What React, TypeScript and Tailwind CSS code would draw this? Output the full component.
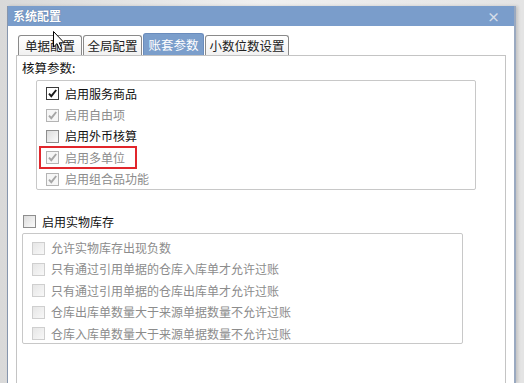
import React from "react";

type Box = "on" | "onDisabled" | "off" | "offDisabled";

const font = { fontFamily: '"Noto Sans CJK SC", "Noto Sans", sans-serif' };

function Check({ kind }: { kind: Box }) {
  const frame =
    kind === "on"
      ? "border-[#3a3a3a] bg-white"
      : kind === "off"
      ? "border-[#8e8e8e] bg-gradient-to-br from-[#dcdcdc] to-[#fbfbfb]"
      : kind === "onDisabled"
      ? "border-[#b4b4b4] bg-[#f6f6f6]"
      : "border-[#cfcfcf] bg-gradient-to-br from-[#e6e6e6] to-[#f8f8f8]";
  const tick = kind === "on" ? "#1a1a1a" : "#a6a6a6";
  return (
    <span className={`w-[13px] h-[13px] border shrink-0 flex items-center justify-center ${frame}`}>
      {(kind === "on" || kind === "onDisabled") && (
        <svg width="11" height="11" viewBox="0 0 11 11">
          <path d="M2 5.6 L4.3 8.2 L9.2 2" fill="none" stroke={tick} strokeWidth="1.9" />
        </svg>
      )}
    </span>
  );
}

function Row({ kind, label, dim, ring }: { kind: Box; label: string; dim?: boolean; ring?: boolean }) {
  return (
    <div className="relative h-[21.4px] flex items-center gap-[6px]">
      <Check kind={kind} />
      <span className={`text-[12px] leading-none ${dim ? "text-[#8c8c8c]" : "text-[#111]"}`}>{label}</span>
      {ring && (
        <span className="absolute left-[-7px] top-[-1px] w-[98px] h-[23px] border-2 border-[#e1262c]" />
      )}
    </div>
  );
}

const tabs = [
  { name: "单据配置", w: "w-[64px]" },
  { name: "全局配置", w: "w-[59px]" },
  { name: "账套参数", w: "w-[61px]", active: true },
  { name: "小数位数设置", w: "w-[84px]" },
];

export default function App() {
  return (
    <div
      className="relative w-[524px] h-[383px] overflow-hidden bg-gradient-to-r from-[#d9d9d9] via-[#f0f0f0] to-[#e4e4e4] pt-[6px] pl-[7px] pr-[8px]"
      style={font}
    >
      <div className="h-full flex flex-col bg-white border-l border-[#8796ad] border-r-2 border-r-[#9aa9c0] shadow-[2px_0_3px_rgba(0,0,0,0.15)]">
        {/* title bar */}
        <div className="h-[20px] shrink-0 bg-[#7a9dcb] flex items-center justify-between pl-[5px] pr-[14px]">
          <span className="text-white text-[12px] font-bold leading-none [text-shadow:0_0_1px_rgba(40,60,100,0.6)]">
            系统配置
          </span>
          <span className="text-[#d4dce8] text-[13px] leading-none font-bold">×</span>
        </div>

        <div className="flex-1 flex flex-col px-[8px] pt-[7px]">
          {/* tabs */}
          <div className="flex items-end gap-[1px] pl-[2px] h-[22px]">
            {tabs.map((t) =>
              t.active ? (
                <div
                  key={t.name}
                  className={`${t.w} h-[22px] rounded-t-[3px] border border-b-0 border-[#6a8cbc] bg-[#7b9ecb] text-white text-[12.5px] flex items-center justify-center pt-[2px]`}
                >
                  {t.name}
                </div>
              ) : (
                <div
                  key={t.name}
                  className={`${t.w} h-[20px] rounded-t-[3px] border border-b-0 border-[#8a8a8a] bg-gradient-to-b from-white to-[#f1f1f1] text-[#222] text-[12.5px] flex items-center justify-center pt-[1px]`}
                >
                  {t.name}
                </div>
              )
            )}
          </div>

          {/* panel */}
          <div className="flex-1 border border-b-0 border-[#c4c4c4] pt-[5px]">
            <div className="pl-[5px] h-[14px] flex items-center text-[12.5px] leading-none text-[#111]">核算参数:</div>

            <div className="ml-[19px] mt-[5px] w-[440px] h-[110px] border border-[#c8c8c8] rounded-[2px] pt-[2px] pl-[9px]">
              <Row kind="on" label="启用服务商品" />
              <Row kind="onDisabled" label="启用自由项" dim />
              <Row kind="off" label="启用外币核算" />
              <Row kind="onDisabled" label="启用多单位" dim ring />
              <Row kind="onDisabled" label="启用组合品功能" dim />
            </div>

            <div className="ml-[6px] mt-[21px]">
              <Row kind="off" label="启用实物库存" />
            </div>

            <div className="ml-[5px] mt-[1px] w-[441px] h-[111px] border border-[#c8c8c8] rounded-[2px] pt-[3px] pl-[9px]">
              <Row kind="offDisabled" label="允许实物库存出现负数" dim />
              <Row kind="offDisabled" label="只有通过引用单据的仓库入库单才允许过账" dim />
              <Row kind="offDisabled" label="只有通过引用单据的仓库出库单才允许过账" dim />
              <Row kind="offDisabled" label="仓库出库单数量大于来源单据数量不允许过账" dim />
              <Row kind="offDisabled" label="仓库入库单数量大于来源单据数量不允许过账" dim />
            </div>
          </div>
        </div>
      </div>

      {/* mouse pointer */}
      <svg className="absolute left-[53px] top-[31px]" width="13" height="20" viewBox="0 0 13 20">
        <path
          d="M0.5 0.5 L0.5 16 L4 12.6 L6.6 18.6 L8.8 17.6 L6.3 11.8 L11.2 11.8 Z"
          fill="white"
          stroke="black"
          strokeWidth="1"
          strokeLinejoin="round"
        />
      </svg>
    </div>
  );
}
